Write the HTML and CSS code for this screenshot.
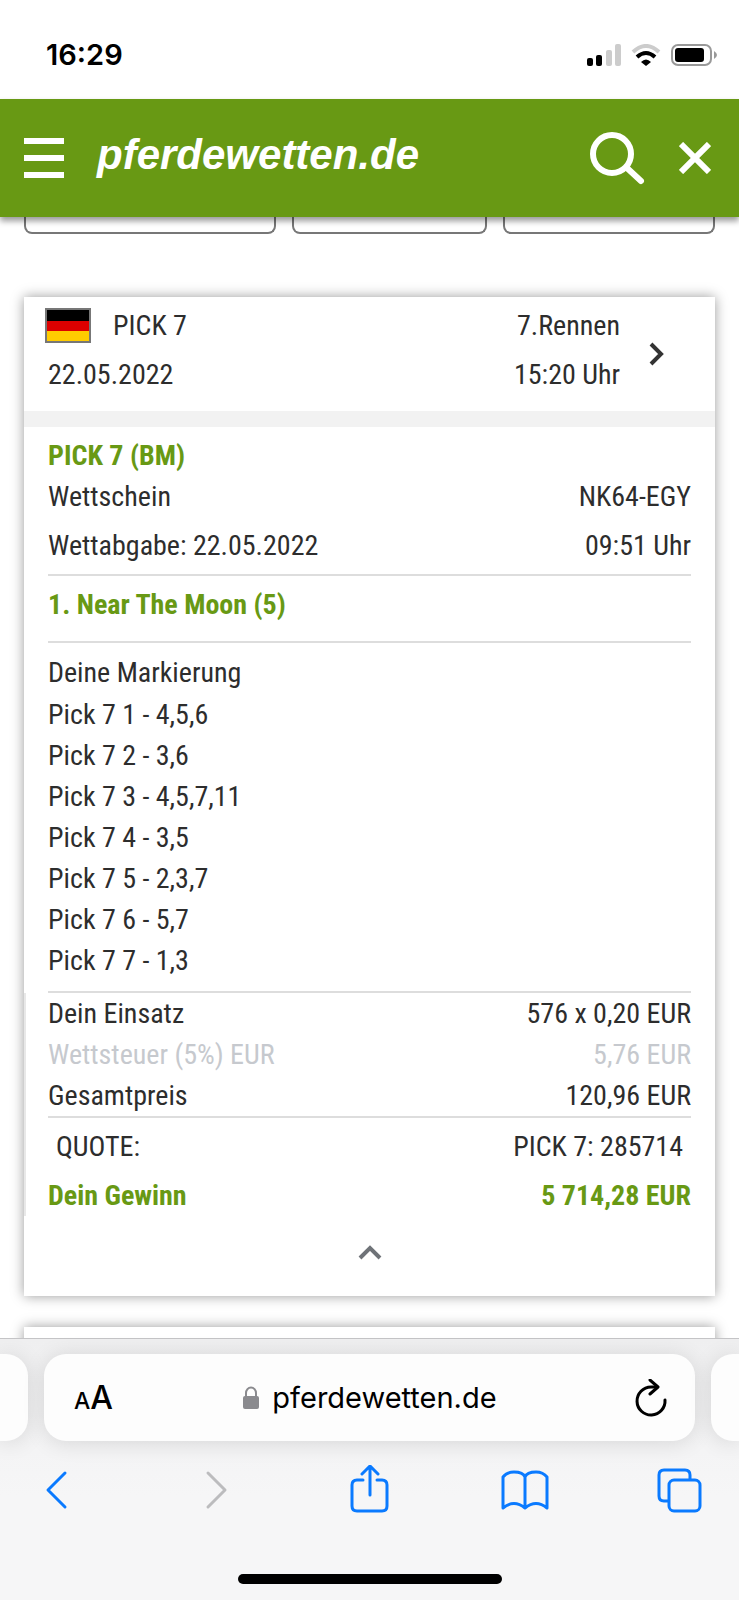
FILE: index.html
```html
<!DOCTYPE html>
<html lang="de">
<head>
    <meta charset="UTF-8">
    <meta name="viewport" content="width=device-width, initial-scale=1.0">
    <title>pferdewetten.de</title>
    <link rel="stylesheet" href="styles.css">
</head>
<body>
    <div class="status-bar">
        <span class="time">16:29</span>
        <div class="status-icons">
            <svg width="34" height="22" viewBox="0 0 34 22">
                <rect x="0" y="14" width="6" height="8" rx="2"/>
                <rect x="9" y="11" width="6" height="11" rx="2"/>
                <rect x="19" y="6" width="6" height="16" rx="2" fill="#ccc"/>
                <rect x="28" y="0" width="6" height="22" rx="2" fill="#ccc"/>
            </svg>
            <svg width="30" height="22" viewBox="0 0 30 22" fill="none" stroke-width="4">
                <path d="M2 8Q15-4 28 8" stroke="#ccc"/>
                <path d="M6 13Q15 5 24 13" stroke="#000"/>
                <path d="M10 18Q15 13 20 18L15 22Z" fill="#000"/>
            </svg>
            <svg width="46" height="22" viewBox="0 0 46 22">
                <rect x="1" y="1" width="39" height="20" rx="6" fill="none" stroke="#999" stroke-width="2"/>
                <rect x="4" y="4" width="29" height="14" rx="3"/>
                <path d="M43 7Q46 9 46 11T43 15Z" fill="#999"/>
            </svg>
        </div>
    </div>

    <header class="header">
        <button class="icon-btn" aria-label="Menü">
            <svg width="40" height="40" viewBox="0 0 40 40" fill="#fff">
                <path d="M0 0h40v6H0zM0 17h40v6H0zM0 34h40v6H0z"/>
            </svg>
        </button>
        <a class="logo" href="#">pferdewetten.de</a>
        <button class="icon-btn" aria-label="Suche">
            <svg width="56" height="54" viewBox="0 0 56 54" fill="none" stroke="#fff" stroke-width="6" stroke-linecap="round">
                <circle cx="23" cy="23" r="19"/>
                <path d="M38 37L52 50"/>
            </svg>
        </button>
        <button class="icon-btn close-btn" aria-label="Schließen">
            <svg width="32" height="32" viewBox="0 0 32 32" fill="none" stroke="#fff" stroke-width="6">
                <path d="M2 2L30 30M30 2L2 30"/>
            </svg>
        </button>
    </header>

    <main class="content">
        <div class="filters">
            <div class="filter"></div>
            <div class="filter"></div>
            <div class="filter"></div>
        </div>

        <section class="card">
            <div class="race">
                <div class="race-info">
                    <div class="row">
                        <span class="race-name">
                            <svg class="flag" width="46" height="35" viewBox="0 0 46 35">
                                <path d="M0 0h46v35H0z" fill="#777"/>
                                <path d="M2 2h42v11H2z"/>
                                <path d="M2 13h42v10H2z" fill="#d00"/>
                                <path d="M2 23h42v10H2z" fill="#fc0"/>
                            </svg>
                            PICK 7
                        </span>
                        <span>7.Rennen</span>
                    </div>
                    <div class="row">
                        <span>22.05.2022</span>
                        <span>15:20 Uhr</span>
                    </div>
                </div>
                <a class="race-link" href="#" aria-label="Zum Rennen">
                    <svg width="16" height="24" viewBox="0 0 16 24" fill="none" stroke="#333" stroke-width="4">
                        <path d="M2 2L12 12L2 22"/>
                    </svg>
                </a>
            </div>

            <div class="slip">
                <div class="row green">PICK 7 (BM)</div>
                <div class="row"><span>Wettschein</span><span>NK64-EGY</span></div>
                <div class="row spaced"><span>Wettabgabe: 22.05.2022</span><span>09:51 Uhr</span></div>
            </div>

            <div class="horse green">1. Near The Moon (5)</div>

            <div class="marks">
                <div>Deine Markierung</div>
                <ul class="picks">
                    <li>Pick 7 1 - 4,5,6</li>
                    <li>Pick 7 2 - 3,6</li>
                    <li>Pick 7 3 - 4,5,7,11</li>
                    <li>Pick 7 4 - 3,5</li>
                    <li>Pick 7 5 - 2,3,7</li>
                    <li>Pick 7 6 - 5,7</li>
                    <li>Pick 7 7 - 1,3</li>
                </ul>
            </div>

            <div class="totals">
                <div class="price">
                    <div class="row"><span>Dein Einsatz</span><span>576 x 0,20 EUR</span></div>
                    <div class="row muted"><span>Wettsteuer (5%) EUR</span><span>5,76 EUR</span></div>
                    <div class="row"><span>Gesamtpreis</span><span>120,96 EUR</span></div>
                </div>
                <div class="row quote"><span>QUOTE:</span><span>PICK 7: 285714</span></div>
                <div class="row spaced green"><span>Dein Gewinn</span><span>5 714,28 EUR</span></div>
            </div>

            <button class="collapse-btn" aria-label="Einklappen">
                <svg width="24" height="16" viewBox="0 0 24 16" fill="none" stroke="#6f7378" stroke-width="4">
                    <path d="M2 13L12 3L22 13"/>
                </svg>
            </button>
        </section>

        <section class="card"></section>
    </main>

    <footer class="browser-bar">
        <div class="tabs">
            <div class="tab-side tab-left"></div>
            <div class="address">
                <button class="icon-btn text-size" aria-label="Textgröße"><small>A</small>A</button>
                <span class="url">
                    <svg width="16" height="24" viewBox="0 0 16 24">
                        <path d="M3 11V7a5 5.500 0 0 1 10 0v4" fill="none" stroke="#8a8a8e" stroke-width="2"/>
                        <rect y="10" width="16" height="13" rx="2" fill="#8a8a8e"/>
                    </svg>
                    pferdewetten.de
                </span>
                <button class="icon-btn" aria-label="Neu laden">
                    <svg width="32" height="38" viewBox="0 0 32 38" fill="none" stroke="#000" stroke-width="3" stroke-linecap="round" stroke-linejoin="round">
                        <path d="M21 8H16A14 14 0 1 0 30 21"/>
                        <path d="M15 1L23 8L15 15"/>
                    </svg>
                </button>
            </div>
            <div class="tab-side tab-right"></div>
        </div>
        <nav class="toolbar">
            <button class="icon-btn" aria-label="Zurück">
                <svg width="60" height="50" viewBox="0 0 60 50"><path d="M38 8L21 25L38 42"/></svg>
            </button>
            <button class="icon-btn forward" aria-label="Vor" disabled>
                <svg width="60" height="50" viewBox="0 0 60 50"><path d="M25 8L42 25L25 42"/></svg>
            </button>
            <button class="icon-btn" aria-label="Teilen">
                <svg width="60" height="50" viewBox="0 0 60 50"><path d="M23 15H17Q12 15 12 20V41Q12 46 17 46H42Q47 46 47 41V20Q47 15 42 15H37M30 30V2M22 9L30 1L38 9"/></svg>
            </button>
            <button class="icon-btn" aria-label="Lesezeichen">
                <svg width="60" height="50" viewBox="0 0 60 50"><path d="M29 12Q27 7 18 7Q11 7 7 12V43Q18 34 29 43Q40 34 51 43V12Q47 7 40 7Q31 7 29 12V43"/></svg>
            </button>
            <button class="icon-btn" aria-label="Tabs">
                <svg width="60" height="50" viewBox="0 0 60 50"><path d="M16 36H12Q7 36 7 31V10Q7 5 12 5H33Q38 5 38 10V14"/><rect x="17" y="15" width="31" height="31" rx="5"/></svg>
            </button>
        </nav>
        <div class="home-indicator"></div>
    </footer>
</body>
</html>
```
FILE: styles.css
```css
* {
    box-sizing: border-box;
}
body {
    margin: 0;
    height: 100vh;
    display: flex;
    flex-direction: column;
    overflow: hidden;
    background: #fff;
    color: #2d2d2d;
    font-family: "Roboto Condensed", "Liberation Sans Narrow", Roboto, sans-serif;
    font-size: 28px;
    line-height: 41px;
}
svg {
    display: block;
}
.icon-btn {
    padding: 0;
    border: none;
    background: none;
    cursor: pointer;
}

/* Status bar */
.status-bar {
    display: flex;
    justify-content: space-between;
    align-items: center;
    flex-shrink: 0;
    height: 99px;
    padding: 10px 22px 0 46px;
    color: #000;
    font-family: Inter, sans-serif;
    font-size: 29px;
    font-weight: 600;
}
.status-icons {
    display: flex;
    gap: 10px;
}

/* Header */
.header {
    display: flex;
    align-items: center;
    flex-shrink: 0;
    height: 118px;
    padding: 0 28px 0 24px;
    background: #689914;
    box-shadow: 0 4px 6px rgba(0, 0, 0, 0.4);
    position: relative;
    z-index: 1;
}
.logo {
    flex: 1;
    margin-left: 33px;
    padding-bottom: 8px;
    color: #fff;
    font-family: "Liberation Sans", Arial, sans-serif;
    font-size: 42px;
    font-weight: bold;
    font-style: italic;
    text-decoration: none;
}
.close-btn {
    margin-left: 34px;
}

/* Page content */
.content {
    flex: 1;
    min-height: 0;
    overflow: hidden;
    padding: 0 24px;
}
.filters {
    display: grid;
    grid-template-columns: 251fr 195fr 211fr;
    gap: 16px;
    margin-bottom: 63px;
}
.filter {
    height: 17px;
    border: 2px solid #777;
    border-top: none;
    border-radius: 0 0 8px 8px;
}
.card {
    margin-bottom: 31px;
    min-height: 40px;
    background: #fff;
    box-shadow: 0 0 12px rgba(0, 0, 0, 0.4);
}
.row {
    display: flex;
    justify-content: space-between;
}
.spaced {
    margin-top: 8px;
}
.green {
    color: #689914;
    font-weight: bold;
}
.muted {
    color: #c6c9ce;
}

.race {
    display: flex;
    align-items: center;
    padding: 0 50px 0 24px;
    border-bottom: 16px solid #f2f2f2;
}
.race-info {
    flex: 1;
    display: grid;
    gap: 8px;
    padding: 8px 0 16px;
}
.race-name {
    display: flex;
    align-items: center;
    gap: 22px;
}
.flag {
    margin-left: -3px;
}
.race-link {
    margin-left: 29px;
}

.slip,
.horse,
.marks {
    margin: 0 24px;
    border-bottom: 2px solid #ddd;
}
.slip {
    padding: 8px 0;
}
.horse {
    padding: 8px 0 16px;
}
.marks {
    padding: 9px 0;
}
.picks {
    margin: 0;
    padding: 1px 0;
    list-style: none;
}
.totals {
    padding: 0 24px 0 22px;
    border-left: 2px solid #e8e8e8;
}
.price {
    border-bottom: 2px solid #ddd;
}
.quote {
    padding: 8px 8px 0;
}
.collapse-btn {
    display: flex;
    justify-content: center;
    width: 100%;
    padding: 29px 0 35px;
    border: none;
    background: none;
    cursor: pointer;
}

/* Browser bar */
.browser-bar {
    flex-shrink: 0;
    padding: 15px 0 16px;
    border-top: 1px solid #c4c4c6;
    background: linear-gradient(#efeff0, #f6f6f7 60%);
    position: relative;
    z-index: 1;
    font-family: Inter, sans-serif;
    font-size: 29px;
    color: #000;
}
.tabs {
    display: flex;
    gap: 16px;
}
.address,
.tab-side {
    height: 87px;
    background: #fdfdfd;
    box-shadow: 0 2px 22px rgba(0, 0, 0, 0.12);
}
.address {
    flex: 1;
    display: flex;
    justify-content: space-between;
    align-items: center;
    padding: 0 28px 0 30px;
    border-radius: 22px;
}
.tab-side {
    width: 28px;
}
.tab-left {
    border-radius: 0 22px 22px 0;
}
.tab-right {
    border-radius: 22px 0 0 22px;
}
.text-size {
    font-family: Inter, sans-serif;
    font-size: 32px;
    font-weight: 500;
    color: #000;
}
.text-size small {
    font-size: 23px;
}
.url {
    display: flex;
    align-items: center;
    gap: 13px;
    margin-right: 8px;
}
.toolbar {
    display: flex;
    justify-content: space-between;
    padding: 24px 27px 59px;
}
.toolbar svg {
    fill: none;
    stroke: #0a7aff;
    stroke-width: 3;
    stroke-linecap: round;
    stroke-linejoin: round;
}
.toolbar .forward svg {
    stroke: #bcbcbe;
}
.home-indicator {
    width: 264px;
    height: 10px;
    margin: 0 auto;
    border-radius: 5px;
    background: #000;
}
```
